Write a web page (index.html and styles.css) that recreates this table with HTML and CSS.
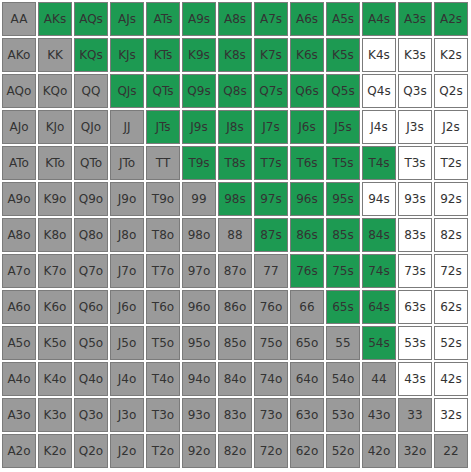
FILE: index.html
```html
<!DOCTYPE html>
<html>
<head>
<meta charset="utf-8">
<link rel="stylesheet" href="styles.css">
</head>
<body>
<table class="grid">
<tr><td class="p">AA</td><td class="r">AKs</td><td class="r">AQs</td><td class="r">AJs</td><td class="r">ATs</td><td class="r">A9s</td><td class="r">A8s</td><td class="r">A7s</td><td class="r">A6s</td><td class="r">A5s</td><td class="r">A4s</td><td class="r">A3s</td><td class="r">A2s</td></tr>
<tr><td class="p">AKo</td><td class="p">KK</td><td class="r">KQs</td><td class="r">KJs</td><td class="r">KTs</td><td class="r">K9s</td><td class="r">K8s</td><td class="r">K7s</td><td class="r">K6s</td><td class="r">K5s</td><td class="w">K4s</td><td class="w">K3s</td><td class="w">K2s</td></tr>
<tr><td class="p">AQo</td><td class="p">KQo</td><td class="p">QQ</td><td class="r">QJs</td><td class="r">QTs</td><td class="r">Q9s</td><td class="r">Q8s</td><td class="r">Q7s</td><td class="r">Q6s</td><td class="r">Q5s</td><td class="w">Q4s</td><td class="w">Q3s</td><td class="w">Q2s</td></tr>
<tr><td class="p">AJo</td><td class="p">KJo</td><td class="p">QJo</td><td class="p">JJ</td><td class="r">JTs</td><td class="r">J9s</td><td class="r">J8s</td><td class="r">J7s</td><td class="r">J6s</td><td class="r">J5s</td><td class="w">J4s</td><td class="w">J3s</td><td class="w">J2s</td></tr>
<tr><td class="p">ATo</td><td class="p">KTo</td><td class="p">QTo</td><td class="p">JTo</td><td class="p">TT</td><td class="r">T9s</td><td class="r">T8s</td><td class="r">T7s</td><td class="r">T6s</td><td class="r">T5s</td><td class="r">T4s</td><td class="w">T3s</td><td class="w">T2s</td></tr>
<tr><td class="p">A9o</td><td class="p">K9o</td><td class="p">Q9o</td><td class="p">J9o</td><td class="p">T9o</td><td class="p">99</td><td class="r">98s</td><td class="r">97s</td><td class="r">96s</td><td class="r">95s</td><td class="w">94s</td><td class="w">93s</td><td class="w">92s</td></tr>
<tr><td class="p">A8o</td><td class="p">K8o</td><td class="p">Q8o</td><td class="p">J8o</td><td class="p">T8o</td><td class="p">98o</td><td class="p">88</td><td class="r">87s</td><td class="r">86s</td><td class="r">85s</td><td class="r">84s</td><td class="w">83s</td><td class="w">82s</td></tr>
<tr><td class="p">A7o</td><td class="p">K7o</td><td class="p">Q7o</td><td class="p">J7o</td><td class="p">T7o</td><td class="p">97o</td><td class="p">87o</td><td class="p">77</td><td class="r">76s</td><td class="r">75s</td><td class="r">74s</td><td class="w">73s</td><td class="w">72s</td></tr>
<tr><td class="p">A6o</td><td class="p">K6o</td><td class="p">Q6o</td><td class="p">J6o</td><td class="p">T6o</td><td class="p">96o</td><td class="p">86o</td><td class="p">76o</td><td class="p">66</td><td class="r">65s</td><td class="r">64s</td><td class="w">63s</td><td class="w">62s</td></tr>
<tr><td class="p">A5o</td><td class="p">K5o</td><td class="p">Q5o</td><td class="p">J5o</td><td class="p">T5o</td><td class="p">95o</td><td class="p">85o</td><td class="p">75o</td><td class="p">65o</td><td class="p">55</td><td class="r">54s</td><td class="w">53s</td><td class="w">52s</td></tr>
<tr><td class="p">A4o</td><td class="p">K4o</td><td class="p">Q4o</td><td class="p">J4o</td><td class="p">T4o</td><td class="p">94o</td><td class="p">84o</td><td class="p">74o</td><td class="p">64o</td><td class="p">54o</td><td class="p">44</td><td class="w">43s</td><td class="w">42s</td></tr>
<tr><td class="p">A3o</td><td class="p">K3o</td><td class="p">Q3o</td><td class="p">J3o</td><td class="p">T3o</td><td class="p">93o</td><td class="p">83o</td><td class="p">73o</td><td class="p">63o</td><td class="p">53o</td><td class="p">43o</td><td class="p">33</td><td class="w">32s</td></tr>
<tr><td class="p">A2o</td><td class="p">K2o</td><td class="p">Q2o</td><td class="p">J2o</td><td class="p">T2o</td><td class="p">92o</td><td class="p">82o</td><td class="p">72o</td><td class="p">62o</td><td class="p">52o</td><td class="p">42o</td><td class="p">32o</td><td class="p">22</td></tr>
</table>
</body>
</html>
```

FILE: styles.css
```css
html, body {
  margin: 0;
  padding: 0;
  background: #ffffff;
}
.grid {
  border-collapse: separate;
  border-spacing: 2px;
  table-layout: fixed;
  font-family: "DejaVu Sans", Verdana, sans-serif;
  font-size: 12px;
  color: #333333;
}
.grid td {
  width: 32px;
  height: 32px;
  padding: 0;
  border: 1px solid #7b7b7b;
  text-align: center;
  vertical-align: middle;
}
.grid td.p {
  background: #9a9a9a;
}
.grid td.r {
  background: #1d9a52;
}
.grid td.w {
  background: #ffffff;
}
```
